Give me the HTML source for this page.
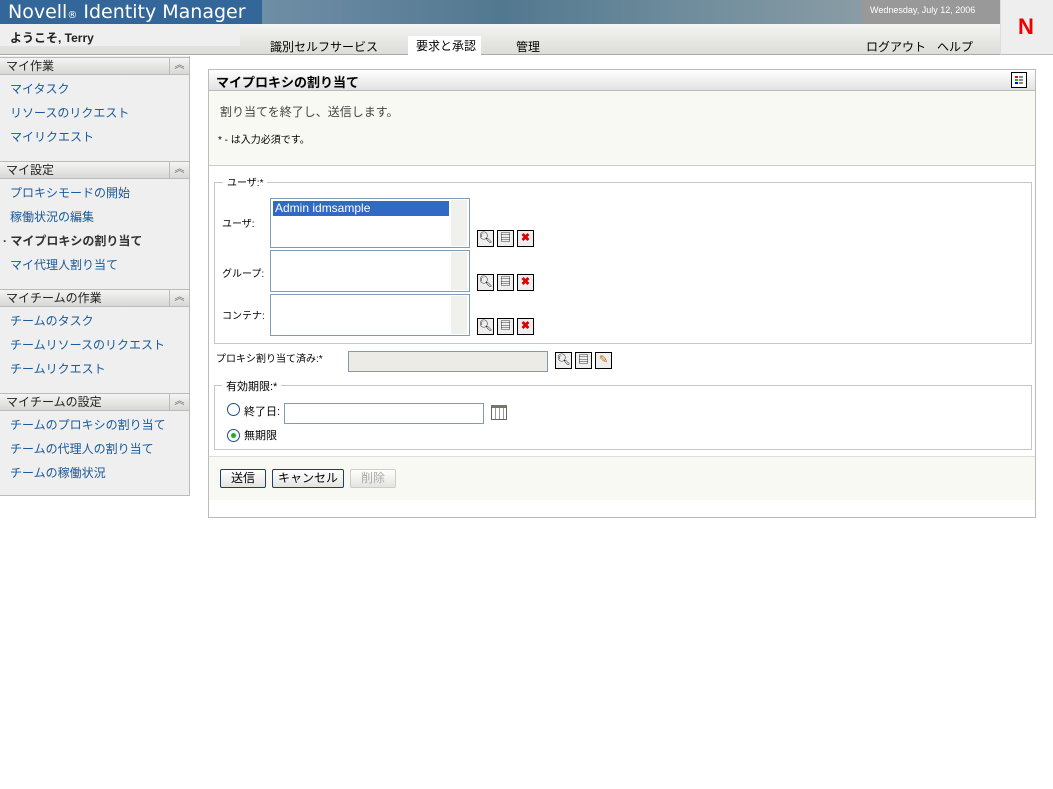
<!DOCTYPE html>
<html><head><meta charset="utf-8">
<style>
*{margin:0;padding:0;box-sizing:border-box}
body{width:1053px;height:789px;background:#fff;font-family:"Liberation Sans","Noto Sans CJK JP",sans-serif;font-size:12px;color:#000;position:relative;overflow:hidden}
.a{position:absolute;white-space:nowrap}
.lnk{color:#1a5a9a}
.sh{position:absolute;left:0;width:189px;height:18px;background:linear-gradient(#f4f4f4,#d8d8d6);border-top:1px solid #bbb;border-bottom:1px solid #bbb;font-size:12px;line-height:16px;padding:0 6px;color:#222}
.sh i{position:absolute;right:0;top:0;width:20px;height:16px;border-left:1px solid #bbb;font-style:normal;text-align:center;font-size:10px;color:#666;line-height:16px}
.box{position:absolute;border:1px solid #7f9db9;background:#fff}
.sb{position:absolute;right:2px;width:16px;background:#f0f0ec}
.btn{position:absolute;width:17px;height:17px;border:1px solid #000;background:#eee;text-align:center;font-size:11px;line-height:15px}
.x{color:#d00;font-weight:bold}
.fs{position:absolute;border:1px solid #c6c6c6}
.bt{position:absolute;height:19px;border:1px solid #1c3f6e;border-radius:2px;background:linear-gradient(#fff,#e4e4de);font-size:12px;text-align:center;line-height:17px}
</style></head><body>
<div class="a" style="left:0;top:0;width:262px;height:24px;background:#336699"></div>
<div class="a" style="left:262px;top:0;width:600px;height:24px;background:linear-gradient(90deg,#6f8ea6,#52788f 40%,#6e8c9c 70%,#8a9ca5)"></div>
<div class="a" style="left:862px;top:0;width:138px;height:24px;background:#999"></div>
<div class="a" style="left:8px;top:1px;font-size:19px;color:#fff;font-family:'DejaVu Sans',sans-serif">Novell<span style="font-size:10px">®</span> Identity Manager</div>
<div class="a" style="left:870px;top:5px;font-size:9px;color:#fff">Wednesday, July 12, 2006</div>
<div class="a" style="left:1000px;top:0;width:53px;height:55px;background:#eee;border-bottom:1px solid #bbb;border-left:1px solid #ddd"></div>
<div class="a" style="left:1018px;top:14px;font-size:22px;font-weight:bold;color:#e00">N</div>
<div class="a" style="left:0;top:24px;width:1000px;height:31px;background:linear-gradient(#f4f4f2,#dcdcd8);border-bottom:1px solid #aaa"></div>
<div class="a" style="left:0;top:24px;width:240px;height:22px;background:#efefef"></div>
<div class="a" style="left:10px;top:29px;font-size:12px;font-weight:bold;color:#222">ようこそ, Terry</div>
<div class="a" style="left:408px;top:36px;width:73px;height:20px;background:#fff"></div>
<div class="a" style="left:270px;top:38px">識別セルフサービス</div>
<div class="a" style="left:416px;top:37px">要求と承認</div>
<div class="a" style="left:516px;top:38px">管理</div>
<div class="a" style="left:866px;top:38px">ログアウト</div>
<div class="a" style="left:937px;top:38px">ヘルプ</div>
<div class="a" style="left:0;top:56px;width:190px;height:440px;background:#efefef;border-right:1px solid #bbb;border-bottom:1px solid #bbb"></div>
<div class="sh" style="top:57px">マイ作業<i>︽</i></div>
<div class="a lnk" style="left:10px;top:80px">マイタスク</div>
<div class="a lnk" style="left:10px;top:104px">リソースのリクエスト</div>
<div class="a lnk" style="left:10px;top:128px">マイリクエスト</div>
<div class="sh" style="top:161px">マイ設定<i>︽</i></div>
<div class="a lnk" style="left:10px;top:184px">プロキシモードの開始</div>
<div class="a lnk" style="left:10px;top:208px">稼働状況の編集</div>
<div class="a" style="left:3px;top:232px;font-weight:bold;color:#333">· マイプロキシの割り当て</div>
<div class="a lnk" style="left:10px;top:256px">マイ代理人割り当て</div>
<div class="sh" style="top:289px">マイチームの作業<i>︽</i></div>
<div class="a lnk" style="left:10px;top:312px">チームのタスク</div>
<div class="a lnk" style="left:10px;top:336px">チームリソースのリクエスト</div>
<div class="a lnk" style="left:10px;top:360px">チームリクエスト</div>
<div class="sh" style="top:393px">マイチームの設定<i>︽</i></div>
<div class="a lnk" style="left:10px;top:416px">チームのプロキシの割り当て</div>
<div class="a lnk" style="left:10px;top:440px">チームの代理人の割り当て</div>
<div class="a lnk" style="left:10px;top:464px">チームの稼働状況</div>
<div class="a" style="left:208px;top:69px;width:828px;height:449px;border:1px solid #bbb;background:#fff"></div>
<div class="a" style="left:209px;top:70px;width:826px;height:21px;background:linear-gradient(#fff,#e2e2e2);border-bottom:1px solid #bbb"></div>
<div class="a" style="left:216px;top:72px;font-weight:bold;font-size:13px">マイプロキシの割り当て</div>
<div class="a" style="left:1011px;top:72px;width:16px;height:16px;border:1px solid #000;background:#fff"><div class="a" style="left:3px;top:3px;width:3px;height:2px;background:red"></div><div class="a" style="left:3px;top:6px;width:3px;height:2px;background:#0c0"></div><div class="a" style="left:3px;top:9px;width:3px;height:2px;background:#00f"></div><div class="a" style="left:7px;top:3px;width:4px;height:8px;background:repeating-linear-gradient(#888 0 2px,#fff 2px 3px)"></div></div>
<div class="a" style="left:209px;top:91px;width:826px;height:75px;background:#f9f9f4;border-bottom:1px solid #ccc"></div>
<div class="a" style="left:220px;top:103px;color:#444">割り当てを終了し、送信します。</div>
<div class="a" style="left:218px;top:131px;font-size:10px">* - は入力必須です。</div>
<div class="fs" style="left:214px;top:182px;width:818px;height:162px"></div>
<div class="a" style="left:223px;top:174px;background:#fff;padding:0 4px;font-size:10px">ユーザ:*</div>
<div class="a" style="left:222px;top:215px;font-size:10px">ユーザ:</div>
<div class="a" style="left:222px;top:265px;font-size:10px">グループ:</div>
<div class="a" style="left:222px;top:307px;font-size:10px">コンテナ:</div>
<div class="box" style="left:270px;top:198px;width:200px;height:50px"><div class="a" style="left:2px;top:2px;width:176px;height:15px;background:#316ac5;color:#fff;padding-left:2px;line-height:15px">Admin idmsample</div><div class="sb" style="top:1px;bottom:1px"></div></div>
<div class="box" style="left:270px;top:250px;width:200px;height:42px"><div class="sb" style="top:1px;bottom:1px"></div></div>
<div class="box" style="left:270px;top:294px;width:200px;height:42px"><div class="sb" style="top:1px;bottom:1px"></div></div>
<div class="btn" style="left:477px;top:230px">🔍︎</div><div class="btn" style="left:497px;top:230px">▤</div><div class="btn x" style="left:517px;top:230px">✖</div>
<div class="btn" style="left:477px;top:274px">🔍︎</div><div class="btn" style="left:497px;top:274px">▤</div><div class="btn x" style="left:517px;top:274px">✖</div>
<div class="btn" style="left:477px;top:318px">🔍︎</div><div class="btn" style="left:497px;top:318px">▤</div><div class="btn x" style="left:517px;top:318px">✖</div>
<div class="a" style="left:216px;top:350px;font-size:10px">プロキシ割り当て済み:*</div>
<div class="a" style="left:348px;top:351px;width:200px;height:21px;background:#ecebe6;border:1px solid #7f9db9"></div>
<div class="btn" style="left:555px;top:352px">🔍︎</div><div class="btn" style="left:575px;top:352px">▤</div><div class="btn" style="left:595px;top:352px;color:#c60">✎</div>
<div class="fs" style="left:214px;top:385px;width:818px;height:65px"></div>
<div class="a" style="left:222px;top:378px;background:#fff;padding:0 4px;font-size:11px">有効期限:*</div>
<div class="a" style="left:227px;top:403px;width:13px;height:13px;border:1px solid #1c5180;border-radius:50%;background:#fff"></div>
<div class="a" style="left:244px;top:403px;font-size:11px">終了日:</div>
<div class="a" style="left:284px;top:403px;width:200px;height:21px;border:1px solid #7f9db9"></div>
<div class="a" style="left:491px;top:405px;width:16px;height:15px;border:1px solid #666;border-top:3px solid #776;background:repeating-linear-gradient(90deg,#fff 0 3px,#999 3px 4px)"></div>
<div class="a" style="left:227px;top:429px;width:13px;height:13px;border:1px solid #1c5180;border-radius:50%;background:radial-gradient(#2a2 0 2px,#fff 3px)"></div>
<div class="a" style="left:244px;top:427px;font-size:11px">無期限</div>
<div class="a" style="left:209px;top:456px;width:826px;height:44px;background:#f9f9f4;border-top:1px solid #ddd"></div>
<div class="bt" style="left:220px;top:469px;width:46px">送信</div>
<div class="bt" style="left:272px;top:469px;width:72px">キャンセル</div>
<div class="bt" style="left:350px;top:469px;width:46px;border-color:#ccc;color:#aaa">削除</div>
</body></html>
